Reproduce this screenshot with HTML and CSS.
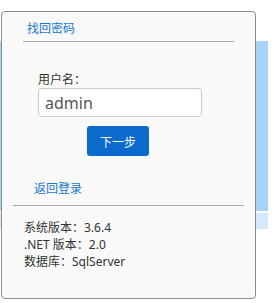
FILE: index.html
```html
<!DOCTYPE html>
<html lang="zh-CN">
<head>
    <meta charset="UTF-8">
    <meta name="viewport" content="width=device-width, initial-scale=1.0">
    <title>找回密码</title>
    <link rel="stylesheet" href="styles.css">
</head>
<body>
    <div class="backdrop">
        <div class="band"></div>
        <div class="band-light"></div>
    </div>
    <div class="panel">
        <div class="panel-head">
            <span class="panel-title">找回密码</span>
        </div>
        <div class="form">
            <label for="username" class="field-label">用户名：</label>
            <input type="text" id="username" class="field-input" value="admin">
            <button class="btn-next">下一步</button>
        </div>
        <div class="back-row">
            <a href="#" class="back-link">返回登录</a>
        </div>
        <div class="info">
            <p>系统版本：3.6.4</p>
            <p>.NET 版本：2.0</p>
            <p>数据库：SqlServer</p>
        </div>
    </div>
</body>
</html>
```

FILE: styles.css
```css
body {
    margin: 0;
    background: #fff;
    font-family: "Noto Sans", "Noto Sans CJK SC", sans-serif;
    font-size: 12px;
    color: #333;
}
.backdrop {
    width: 268px;
    padding-top: 41px;
}
.band {
    height: 170px;
    background: #a6d3f6;
}
.band-light {
    height: 16px;
    margin-top: 2px;
    background: #d4eafc;
}
.panel {
    position: absolute;
    left: 1px;
    top: 11px;
    width: 253px;
    height: 286px;
    background: #f9f9f9;
    border: 1px solid #8c8c8c;
    border-radius: 4px;
}
.panel-head {
    margin: 0 21px;
    padding: 8px 0 3px 4px;
    line-height: 18px;
    border-bottom: 1px solid #aaa;
}
.panel-title {
    color: #1677d2;
}
.form {
    padding: 30px 0 0 36px;
}
.field-label {
    display: block;
    line-height: 16px;
}
.field-input {
    display: block;
    box-sizing: border-box;
    width: 164px;
    height: 29px;
    margin: 0;
    padding: 0 6px;
    border: 1px solid #ccc;
    border-radius: 4px;
    background: #fff;
    font-family: "Noto Sans", sans-serif;
    font-size: 16px;
    color: #555;
}
.btn-next {
    display: block;
    width: 62px;
    height: 30px;
    margin: 9px 0 0 49px;
    padding: 0;
    border: none;
    border-radius: 3px;
    background: #0a6bcd;
    color: #fff;
    font-family: "Noto Sans CJK SC", sans-serif;
    font-size: 12px;
    cursor: pointer;
}
.back-row {
    margin: 24px 11px 0;
    padding: 0 0 7px 21px;
    line-height: 18px;
    border-bottom: 1px solid #aaa;
}
.back-link {
    color: #1677d2;
    text-decoration: none;
}
.info {
    padding: 13px 0 0 22px;
}
.info p {
    margin: 0;
    line-height: 17px;
}
```
